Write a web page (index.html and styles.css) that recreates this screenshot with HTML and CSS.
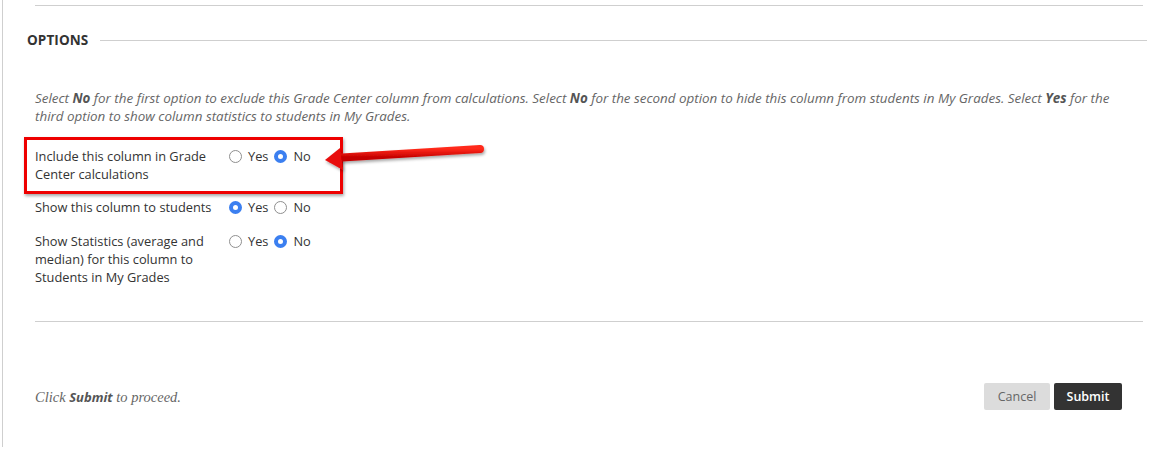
FILE: index.html
```html
<!DOCTYPE html>
<html>
<head>
<meta charset="utf-8">
<link rel="stylesheet" href="styles.css">
</head>
<body>
<div class="frame">
  <div class="content">
    <div class="rule top-rule"></div>
    <div class="section-head">
      <h2 class="section-title">OPTIONS</h2>
      <div class="section-line"></div>
    </div>
    <p class="instructions">Select <b>No</b> for the first option to exclude this Grade Center column from calculations. Select <b>No</b> for the second option to hide this column from students in My Grades. Select <b>Yes</b> for the third option to show column statistics to students in My Grades.</p>
    <div class="options">
      <div class="opt-row first">
        <div class="opt-label">Include this column in Grade Center calculations</div>
        <div class="radios">
          <span class="radio"></span><span class="radio-text">Yes</span>
          <span class="radio on"></span><span class="radio-text">No</span>
        </div>
      </div>
      <div class="opt-row">
        <div class="opt-label">Show this column to students</div>
        <div class="radios">
          <span class="radio on"></span><span class="radio-text">Yes</span>
          <span class="radio"></span><span class="radio-text">No</span>
        </div>
      </div>
      <div class="opt-row">
        <div class="opt-label">Show Statistics (average and median) for this column to Students in My Grades</div>
        <div class="radios">
          <span class="radio"></span><span class="radio-text">Yes</span>
          <span class="radio on"></span><span class="radio-text">No</span>
        </div>
      </div>
    </div>
    <div class="rule bottom-rule"></div>
    <div class="footer">
      <p class="proceed">Click <b>Submit</b> to proceed.</p>
      <div class="buttons">
        <button class="btn cancel">Cancel</button>
        <button class="btn submit">Submit</button>
      </div>
    </div>
  </div>
  <div class="highlight"></div>
  <svg class="arrow" width="180" height="40" viewBox="320 135 180 40">
    <defs>
      <linearGradient id="ag" x1="0" y1="0" x2="0" y2="1">
        <stop offset="0" stop-color="#ff2a1a"/>
        <stop offset="1" stop-color="#c40000"/>
      </linearGradient>
      <filter id="sh" x="-10%" y="-40%" width="120%" height="180%">
        <feDropShadow dx="1" dy="2" stdDeviation="1.5" flood-color="#000" flood-opacity="0.35"/>
      </filter>
    </defs>
    <g filter="url(#sh)">
      <line x1="480" y1="149" x2="342" y2="157.5" stroke="url(#ag)" stroke-width="8" stroke-linecap="round"/>
      <polygon points="325,160 340,148 343,170" fill="#e80c0c"/>
    </g>
  </svg>
</div>
</body>
</html>
```
FILE: styles.css
```css
html, body {
  margin: 0;
  padding: 0;
  background: #fff;
}
body {
  font-family: "Open Sans", "Liberation Sans", sans-serif;
  color: #333;
}
.frame {
  position: relative;
  margin-left: 2px;
  height: 447px;
  border-left: 1px solid #cfcfcf;
}
.content {
  padding: 5px 20px 0 32px;
}
.rule {
  border-top: 1px solid #cfcfcf;
  height: 0;
}
.section-head {
  display: flex;
  align-items: center;
  margin: 24px -4px 0 -8px;
  height: 20px;
}
.section-title {
  margin: 0 12px 0 0;
  font-size: 13.5px;
  font-weight: 700;
  color: #333;
  letter-spacing: 0.1px;
}
.section-line {
  flex: 1;
  border-top: 1px solid #cfcfcf;
}
.instructions {
  margin: 39px 0 0 0;
  padding-right: 25px;
  font-size: 13.4px;
  line-height: 18px;
  font-style: italic;
  color: #666;
}
.instructions b {
  color: #555;
}
.options {
  display: flex;
  flex-direction: column;
  gap: 15px;
  margin-top: 22px;
}
.opt-row {
  display: flex;
  align-items: flex-start;
}
.opt-row + .opt-row + .opt-row {
  margin-top: 1px;
}
.opt-label {
  width: 185px;
  margin-right: 9px;
  font-size: 12.8px;
  line-height: 18px;
  color: #333;
}
.radios {
  display: flex;
  align-items: center;
  height: 18px;
  font-size: 12.8px;
  color: #333;
}
.radio {
  box-sizing: border-box;
  width: 13px;
  height: 13px;
  border-radius: 50%;
  border: 1px solid #8f8f8f;
  background: #fff;
  margin-right: 6px;
}
.radio.on {
  border: 4.5px solid #3b7ff0;
  background: #fff;
}
.radio-text {
  margin-right: 6px;
}
.bottom-rule {
  margin-top: 35px;
}
.footer {
  display: flex;
  align-items: center;
  justify-content: space-between;
  margin-top: 61px;
  padding-right: 21px;
}
.proceed {
  margin: 0;
  font-family: "Liberation Serif", "DejaVu Serif", serif;
  font-style: italic;
  font-size: 14.5px;
  color: #666;
}
.proceed b {
  font-family: "Open Sans", "Liberation Sans", sans-serif;
  font-size: 13px;
  font-weight: 700;
  color: #555;
}
.buttons {
  display: flex;
  gap: 4px;
}
.btn {
  height: 27px;
  border: none;
  border-radius: 2px;
  font-family: "Open Sans", "Liberation Sans", sans-serif;
  font-size: 12.5px;
  padding: 0;
}
.cancel {
  width: 66px;
  background: #dcdcdc;
  color: #666;
}
.submit {
  width: 68px;
  background: #333;
  color: #fff;
  font-weight: 600;
}
.highlight {
  position: absolute;
  left: 21px;
  top: 137px;
  width: 313px;
  height: 51px;
  border: 3px solid #ee0000;
  box-shadow: 1px 2px 3px rgba(0,0,0,0.35);
}
.arrow {
  position: absolute;
  left: 317px;
  top: 135px;
}
```
